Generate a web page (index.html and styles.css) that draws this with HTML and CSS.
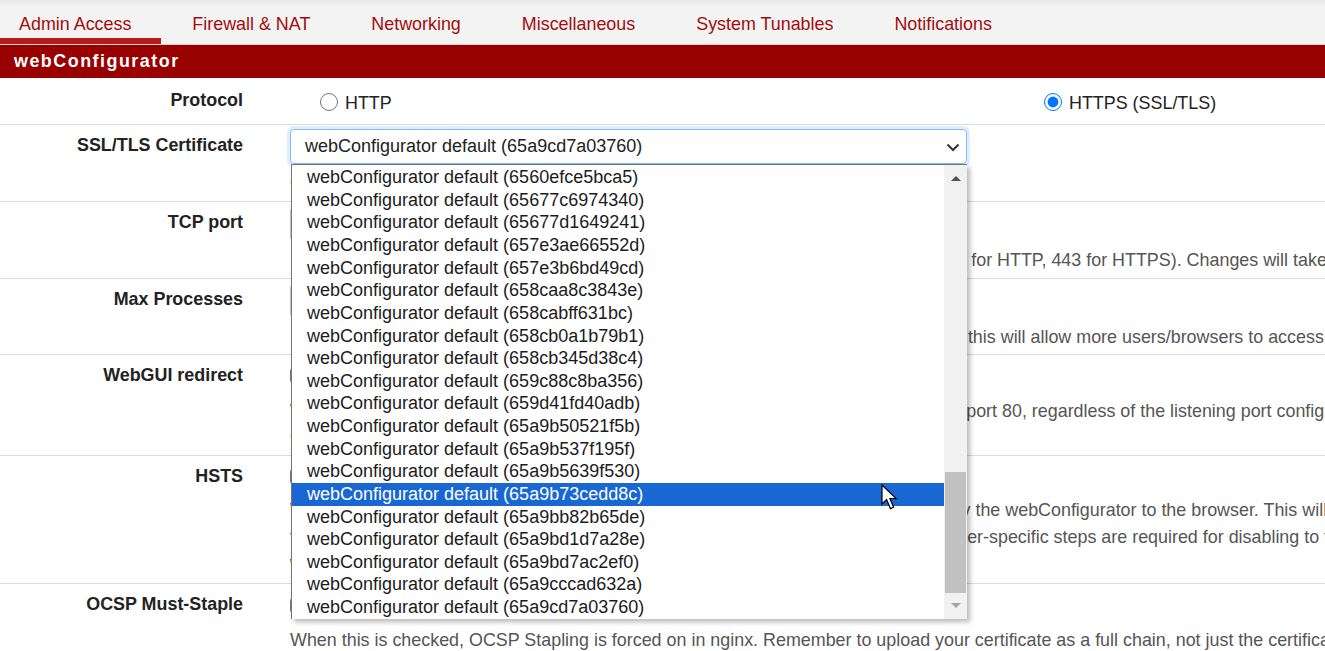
FILE: index.html
```html
<!DOCTYPE html>
<html lang="en">
<head>
<meta charset="utf-8">
<title>System / Advanced / Admin Access</title>
<link rel="stylesheet" href="styles.css">
</head>
<body>
<nav class="tabs">
  <a class="tab tab-first active">Admin Access</a>
  <a class="tab">Firewall &amp; NAT</a>
  <a class="tab">Networking</a>
  <a class="tab">Miscellaneous</a>
  <a class="tab">System Tunables</a>
  <a class="tab">Notifications</a>
</nav>
<div class="panel-title">webConfigurator</div>

<div class="row row-protocol">
  <div class="row-label">Protocol</div>
  <div class="row-body radios">
    <label class="radio-opt"><input type="radio" name="proto" class="radio"><span>HTTP</span></label>
    <label class="radio-opt"><input type="radio" name="proto" class="radio" checked><span>HTTPS (SSL/TLS)</span></label>
  </div>
</div>

<div class="row row-cert">
  <div class="row-label">SSL/TLS Certificate</div>
  <div class="row-body">
    <div class="select-wrap">
      <div class="select">
        <span>webConfigurator default (65a9cd7a03760)</span>
        <svg class="chev" width="14" height="9" viewBox="0 0 14 9"><path d="M1.5 1.5 L7 7 L12.5 1.5" fill="none" stroke="#333" stroke-width="2"/></svg>
      </div>
      <div class="dropdown">
        <div class="opts">
          <div class="opt">webConfigurator default (6560efce5bca5)</div>
          <div class="opt">webConfigurator default (65677c6974340)</div>
          <div class="opt">webConfigurator default (65677d1649241)</div>
          <div class="opt">webConfigurator default (657e3ae66552d)</div>
          <div class="opt">webConfigurator default (657e3b6bd49cd)</div>
          <div class="opt">webConfigurator default (658caa8c3843e)</div>
          <div class="opt">webConfigurator default (658cabff631bc)</div>
          <div class="opt">webConfigurator default (658cb0a1b79b1)</div>
          <div class="opt">webConfigurator default (658cb345d38c4)</div>
          <div class="opt">webConfigurator default (659c88c8ba356)</div>
          <div class="opt">webConfigurator default (659d41fd40adb)</div>
          <div class="opt">webConfigurator default (65a9b50521f5b)</div>
          <div class="opt">webConfigurator default (65a9b537f195f)</div>
          <div class="opt">webConfigurator default (65a9b5639f530)</div>
          <div class="opt sel">webConfigurator default (65a9b73cedd8c)</div>
          <div class="opt">webConfigurator default (65a9bb82b65de)</div>
          <div class="opt">webConfigurator default (65a9bd1d7a28e)</div>
          <div class="opt">webConfigurator default (65a9bd7ac2ef0)</div>
          <div class="opt">webConfigurator default (65a9cccad632a)</div>
          <div class="opt">webConfigurator default (65a9cd7a03760)</div>
        </div>
        <div class="sb">
          <div class="sb-btn"><span class="tri-up"></span></div>
          <div class="sb-track"><div class="sb-thumb"></div></div>
          <div class="sb-btn"><span class="tri-down"></span></div>
        </div>
      </div>
    </div>
    <div class="help">Certificates known to be incompatible with HTTPS are not included.</div>
  </div>
</div>

<div class="row">
  <div class="row-label">TCP port</div>
  <div class="row-body">
    <div class="input"></div>
    <div class="help">Enter a custom port number for the webConfigurator above to override the default (80 for HTTP, 443 for HTTPS). Changes will take effect immediately after save.</div>
  </div>
</div>

<div class="row">
  <div class="row-label">Max Processes</div>
  <div class="row-body">
    <div class="input"></div>
    <div class="help">Enter the number of webConfigurator processes to use. This defaults to 2. Increasing this will allow more users/browsers to access the GUI concurrently.</div>
  </div>
</div>

<div class="row row-redirect">
  <div class="row-label">WebGUI redirect</div>
  <div class="row-body">
    <label class="check-line"><input type="checkbox" class="check"><span>Disable webConfigurator redirect rule</span></label>
    <div class="help">When this is unchecked,&nbsp; access to the webConfigurator is always permitted even on port 80, regardless of the listening port configured.</div>
    <div class="help-next">Check this box to disable this automatically added redirect rule.</div>
  </div>
</div>

<div class="row row-hsts">
  <div class="row-label">HSTS</div>
  <div class="row-body">
    <label class="check-line"><input type="checkbox" class="check"><span>Disable HTTP Strict Transport Security</span></label>
    <div class="help">When this is unchecked,&nbsp; Strict-Transport-Security HTTPS response header is sent by the webConfigurator to the browser. This will force the browser to use only HTTPS.</div>
    <div class="help-next">for future request to the firewall FQDN. Check this box to disable HSTS. (Note: Browser-specific steps are required for disabling to take effect</div>
    <div class="help-next">when the browser already visited the FQDN while HSTS was enabled.)</div>
  </div>
</div>

<div class="row row-ocsp">
  <div class="row-label">OCSP Must-Staple</div>
  <div class="row-body">
    <label class="check-line"><input type="checkbox" class="check"><span>Force OCSP Stapling in nginx</span></label>
    <div class="help">When this is checked, OCSP Stapling is forced on in nginx. Remember to upload your certificate as a full chain, not just the certificate, or this option will be ignored by nginx.</div>
  </div>
</div>

<svg class="cursor" width="18" height="28" viewBox="0 0 18 28">
  <path d="M1 1 L1 20 L5.6 15.6 L9.4 24.6 L12.6 23.2 L8.9 14.6 L15.2 14.6 Z" fill="#fff" stroke="#000" stroke-width="1.2" stroke-linejoin="miter"/>
</svg>
</body>
</html>
```

FILE: styles.css
```css
* {
  box-sizing: border-box;
}

html,
body {
  margin: 0;
  padding: 0;
}

body {
  width: 1325px;
  height: 651px;
  overflow: hidden;
  position: relative;
  background: #fff;
  color: #222;
  font-family: "Liberation Sans", Arial, sans-serif;
  font-size: 17.9px;
}

/* tabs */
.tabs {
  display: flex;
  height: 45px;
  background: linear-gradient(#e9e9e9, #f3f3f3 7px, #f3f3f3);
  border-bottom: 1px solid #d2d2d2;
}

.tab {
  height: 44px;
  padding: 13px 30px 0 31px;
  line-height: 22px;
  color: #a30d0d;
  white-space: nowrap;
  border-bottom: 6px solid transparent;
}

.tab-first {
  padding-left: 19px;
}

.tab.active {
  border-bottom-color: #b51c1c;
}

.panel-title {
  height: 33px;
  line-height: 33px;
  padding-left: 14px;
  background: #990000;
  color: #fff;
  font-weight: bold;
  letter-spacing: 1.5px;
}

/* rows */
.row {
  display: flex;
  border-bottom: 1px solid #dcdcdc;
}

.row-label {
  flex: 0 0 243px;
  text-align: right;
  font-weight: bold;
  padding-top: 8px;
  line-height: 24px;
  color: #222;
  white-space: nowrap;
}

.row-body {
  flex: 1 1 auto;
  min-width: 0;
  margin-left: 47px;
  padding: 5px 0 4px;
}

.row-protocol .row-label {
  padding-top: 10px;
}

.radios {
  display: grid;
  grid-template-columns: 724px auto;
  padding: 14px 0 10px;
  line-height: 22px;
}

.radio-opt {
  display: flex;
  align-items: center;
  gap: 7px;
  padding-left: 30px;
  white-space: nowrap;
}

.radio {
  width: 18px;
  height: 18px;
  margin: -3px 0 0 0;
  accent-color: #0075ff;
}

.row-cert .row-body {
  padding: 4px 0 5px;
}

.select-wrap {
  position: relative;
  width: 677px;
}

.select {
  display: flex;
  align-items: center;
  height: 35px;
  padding: 0 6px 0 14px;
  border: 1px solid #80bdff;
  border-radius: 4px;
  box-shadow: 0 0 0 3px rgba(0, 123, 255, 0.13);
  font-size: 18px;
  color: #222;
  white-space: nowrap;
}

.chev {
  margin-left: auto;
  margin-top: 1px;
}

.dropdown {
  position: absolute;
  left: 1px;
  top: 35px;
  width: 676px;
  z-index: 10;
  display: flex;
  background: #fff;
  border-left: 1px solid #767676;
  border-top: 1px solid #767676;
  box-shadow: 3px 3px 5px rgba(0, 0, 0, 0.28);
}

.opts {
  flex: 1 1 auto;
  padding-top: 1.2px;
}

.opt {
  height: 22.63px;
  line-height: 22.63px;
  padding-left: 15px;
  font-size: 18px;
  color: #1c1c1c;
  white-space: nowrap;
}

.opt.sel {
  background: #1967d2;
  color: #fff;
}

.sb {
  flex: 0 0 23px;
  display: flex;
  flex-direction: column;
  background: #f1f1f1;
}

.sb-btn {
  height: 26px;
  display: flex;
  align-items: center;
  justify-content: center;
}

.tri-up {
  width: 0;
  height: 0;
  border-left: 5px solid transparent;
  border-right: 5px solid transparent;
  border-bottom: 5px solid #505050;
}

.tri-down {
  width: 0;
  height: 0;
  border-left: 5px solid transparent;
  border-right: 5px solid transparent;
  border-top: 5px solid #a3a3a3;
}

.sb-track {
  flex: 1 1 auto;
  display: flex;
  flex-direction: column;
  justify-content: flex-end;
  padding: 0 1px;
}

.sb-thumb {
  height: 121px;
  background: #c1c1c1;
}

.input {
  width: 677px;
  height: 34px;
  border: 1px solid #c4c4c4;
  border-radius: 4px;
  background: #fff;
}

.help {
  margin-top: 6px;
  line-height: 26.3px;
  color: #555;
  white-space: nowrap;
}

.help-next {
  line-height: 26.3px;
  color: #555;
  white-space: nowrap;
}

.check-line {
  display: flex;
  align-items: center;
  gap: 6px;
  height: 32px;
  white-space: nowrap;
}

.check {
  width: 15px;
  height: 15px;
  margin: 0;
}

.row-redirect .row-body {
  padding-bottom: 5px;
}

.row-hsts .check-line {
  height: 30px;
}

.row-hsts .row-body {
  padding-bottom: 7px;
}

.cursor {
  position: absolute;
  left: 881px;
  top: 484px;
  z-index: 20;
}
```
